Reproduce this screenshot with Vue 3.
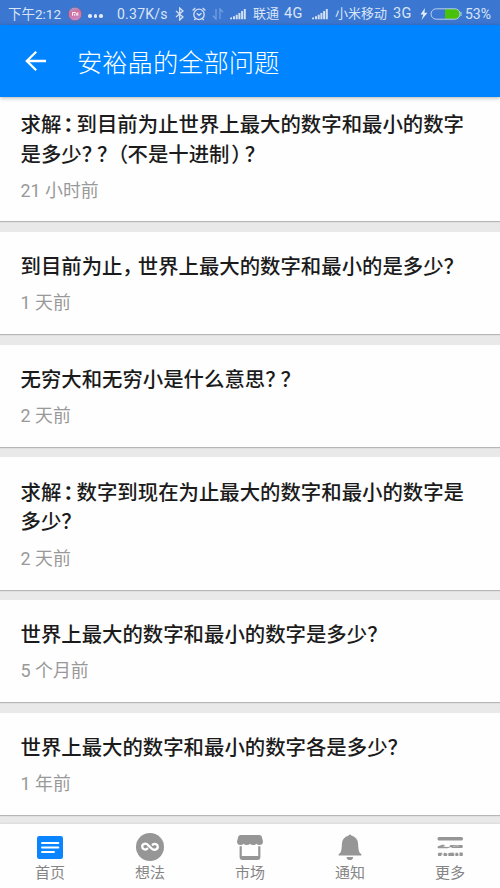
<script setup>
const questions = [
  { lines: ['求解：到目前为止世界上最大的数字和最小的数字', '是多少？？（不是十进制）？'], time: '21 小时前' },
  { lines: ['到目前为止，世界上最大的数字和最小的是多少？'], time: '1 天前' },
  { lines: ['无穷大和无穷小是什么意思？？'], time: '2 天前' },
  { lines: ['求解：数字到现在为止最大的数字和最小的数字是', '多少？'], time: '2 天前' },
  { lines: ['世界上最大的数字和最小的数字是多少？'], time: '5 个月前' },
  { lines: ['世界上最大的数字和最小的数字各是多少？'], time: '1 年前' },
]
const kinds = { '：': 'colon', '？': 'ask', '，': 'comma', '（': 'open', '）': 'close' }
const parts = (line) => line.split(/([：？，（）])/).filter(Boolean).map((t) => ({ t, kind: kinds[t] }))
</script>

<template>
  <div class="screen">
    <header class="status">
      <span class="clock">下午2:12</span>
      <svg class="mi" viewBox="0 0 16 16">
        <defs>
          <linearGradient id="ball" x1="0" y1="0" x2="0.3" y2="1">
            <stop offset="0" stop-color="#8fb6ef" /><stop offset="0.45" stop-color="#d56c9b" /><stop offset="1" stop-color="#c787c8" />
          </linearGradient>
        </defs>
        <circle cx="8" cy="8" r="6.9" fill="url(#ball)" stroke="#56699f" stroke-width="0.9" />
        <path d="M5.5 9.6V6.5h2.8q1 0 1 1v2.1M7.4 8v1.6M10.8 6.4v3.2" fill="none" stroke="#fff" stroke-width="1" />
      </svg>
      <span class="dots"><i></i><i></i><i></i></span>
      <span class="speed">0.37K/s</span>
      <svg class="bt" viewBox="0 0 10 14"><path d="M1 4l7 6-3.3 3V1L8 4l-7 6" fill="none" stroke="#d3e0f4" stroke-width="1.3" /></svg>
      <svg class="alarm" viewBox="0 0 14 14"><g fill="none" stroke="#d3e0f4" stroke-width="1.3"><circle cx="7" cy="7.4" r="5.2" /><path d="M4.7 6.3L7 8.3l2.500-2M.6 3.400L3.300 1M13.400 3.400L10.700 1M3.500 11.600l-1.200 1.500M10.500 11.600l1.200 1.500" /></g></svg>
      <svg class="arrows" viewBox="0 0 12 12"><path d="M4 1v10L1 7.700M8 11V1l3 3.300" fill="none" stroke="#759fdf" stroke-width="1.300" /></svg>
      <svg class="signal s1" viewBox="0 0 16 12"><path d="M0 11.300V10l2-1v2.300zM3 8.300h2v3H3zM5.700 6.800h2v4.500h-2zM8.400 5h2v6.300h-2zM11.100 3h2v8.300h-2zM13.800 1h2v10.300h-2z" fill="#d3e0f4" /></svg>
      <span class="unicom">联通</span>
      <span class="g4">4G</span>
      <svg class="signal s2" viewBox="0 0 16 12"><path d="M0 11.300V10l2-1v2.300zM3 8.300h2v3H3zM5.700 6.800h2v4.500h-2zM8.400 5h2v6.300h-2zM11.100 3h2v8.300h-2zM13.800 1h2v10.300h-2z" fill="#d3e0f4" /></svg>
      <span class="mobile">小米移动</span>
      <span class="g3">3G</span>
      <svg class="bolt" viewBox="0 0 8 12"><path d="M5 0L.5 6.600h2.800L1.500 12 7.500 4.800H4.400z" fill="#e3ecf9" /></svg>
      <svg class="battery" viewBox="0 0 32 12"><path d="M15 1h10.500a5 5 0 0 1 0 10H15z" fill="#48c10a" /><rect x="1" y=".8" width="29" height="10.400" rx="5.200" fill="none" stroke="#b9cfee" stroke-width="1" /><path d="M31 4v4" stroke="#b9cfee" /></svg>
      <span class="percent">53%</span>
    </header>

    <div class="appbar">
      <svg class="back" viewBox="0 0 22 22"><path d="M21 11H2M11.200 1.700L1.800 11l9.400 9.300" fill="none" stroke="#fff" stroke-width="2.300" /></svg>
      <h1>安裕晶的全部问题</h1>
    </div>

    <main>
      <article v-for="(q, i) in questions" :key="i" :class="{ first: i === 0 }">
        <h2>
          <span v-for="line in q.lines" :key="line" class="line"><span v-for="(p, j) in parts(line)" :key="j" :class="p.kind && ['punct', p.kind]">{{ p.t }}</span></span>
        </h2>
        <p>{{ q.time }}</p>
      </article>
    </main>

    <nav>
      <div class="tab">
        <svg viewBox="0 0 28 28"><rect x="1" y="3" width="26" height="23" rx="2.300" fill="#0a84ff" /><path d="M6 10h16.300M6 14.500h16.300M6 19h12" stroke="#fff" stroke-width="2" stroke-linecap="round" /></svg>
        <span>首页</span>
      </div>
      <div class="tab">
        <svg viewBox="0 0 28 28"><circle cx="14" cy="14" r="14" fill="#969696" /><path d="M11.300 15.600C9.300 17.300 6.200 16.400 6.200 13.600C6.200 10.600 10 9.700 12 12.100L15.600 15.500C17.600 17.700 21.800 16.900 21.800 13.800C21.800 11 18.700 10 16.700 11.700" fill="none" stroke="#fff" stroke-width="2.300" stroke-linecap="round" /></svg>
        <span>想法</span>
      </div>
      <div class="tab">
        <svg viewBox="0 0 28 28"><g fill="#969696"><path d="M4.500 2h19q1.600 0 2.200 1.600L27 8.500q0 3.200-3.300 3.500-2.400 0-3.300-1.300-.9 1.300-3.200 1.300t-3.200-1.300q-.9 1.300-3.200 1.300t-3.200-1.300q-.9 1.300-3.300 1.300Q1 11.700 1 8.500l1.300-4.900Q2.900 2 4.500 2z" /><path d="M3.600 13.200h2.200V23h16.400v-9.800h2.200V24q0 3-2.700 3h-15.200q-2.900 0-2.900-3z" /></g></svg>
        <span>市场</span>
      </div>
      <div class="tab">
        <svg viewBox="0 0 28 28"><path d="M12.600 2.600q1.400-2.300 2.800 0 6.300 1.700 6.700 8.300.2 7.200 1.800 9l1.500 1.400v1.200H2.600v-1.200L4.100 20q1.600-1.900 1.800-9.100.4-6.600 6.700-8.300zM10.500 23.900h6.700q-.5 3.200-3.300 3.200t-3.400-3.200z" fill="#969696" /></svg>
        <span>通知</span>
      </div>
      <div class="tab">
        <svg viewBox="0 0 28 28"><g fill="#969696"><rect x="1.500" y="4" width="25.500" height="3.600" rx="1.600" /><path d="M2 13.200l5-1.700 2.500 1.500-3.500.8 7 .2 1.500-2h11.800q1 1.500 0 3H16l-1-1-3.500 1.300H2.300Q.8 14.600 2 13.200z" /><path d="M2.500 19.700h3.700l-1 3.300H2.300q-1.300-1.500.2-3.300zM8 19.700l2.500.4.700 2.900H7.500zM12.500 20l5-.6.800 3.600h-6zM19.500 19.700h2.300l.6 3.300h-3zM23.500 19.500h3q1 1.800 0 3.500h-3z" /><path d="M6 20.700h17v1H6z" opacity=".55" /></g><path d="M17 13.600l3-.8 3 .5" fill="none" stroke="#d2d2d2" stroke-width=".8" /></svg>
        <span>更多</span>
      </div>
    </nav>
  </div>
</template>

<style>
body { margin: 0; }
</style>

<style scoped>
.screen {
  width: 500px;
  height: 888px;
  display: flex;
  flex-direction: column;
  overflow: hidden;
  background: #e9e9e9;
  font-family: Roboto, "Noto Sans CJK SC", sans-serif;
}
.status {
  flex: none;
  height: 25px;
  display: flex;
  align-items: center;
  box-sizing: border-box;
  padding: 2px 0 0 8px;
  background: #3b76d1;
  color: #d9e5f6;
  font-size: 13px;
  line-height: 22px;
  white-space: nowrap;
}
.status > * { flex: none; }
.clock { width: 59px; font-size: 13.500px; }
.mi { width: 16px; height: 16px; margin-right: 5px; }
.dots { width: 29px; display: flex; gap: 2px; padding-top: 5px; }
.dots i { width: 3.500px; height: 3.500px; border-radius: 50%; background: #e0eaf8; }
.speed { width: 58px; font-size: 14px; letter-spacing: .25px; }
.bt { width: 10px; height: 14px; margin-right: 7px; }
.alarm { width: 14px; height: 14px; margin-right: 6px; }
.arrows { width: 12px; height: 12px; margin-right: 6px; }
.signal { width: 16px; height: 12px; margin-right: 7px; }
.unicom { width: 31px; }
.g4 { width: 28px; font-size: 14.500px; letter-spacing: .3px; }
.mobile { width: 58px; }
.g3 { width: 27px; font-size: 14.500px; letter-spacing: .3px; }
.bolt { width: 8px; height: 12px; margin-right: 2px; }
.battery { width: 32px; height: 12px; margin-right: 3px; }
.percent { font-size: 14px; }
.appbar {
  flex: none;
  position: relative;
  z-index: 1;
  height: 72px;
  display: flex;
  align-items: center;
  box-sizing: border-box;
  padding-left: 25px;
  background: #0084ff;
  box-shadow: 0 1px 4px rgba(0, 0, 0, .3);
}
.back { width: 22px; height: 22px; margin-right: 30px; }
h1 {
  margin: 0;
  color: #fff;
  font-family: "Noto Sans CJK SC", sans-serif;
  font-size: 25.300px;
  font-weight: 300;
  line-height: 36px;
  padding-bottom: 1px;
}
main { flex: 1; min-height: 0; overflow: hidden; }
article {
  box-sizing: border-box;
  padding: 19.400px 20.500px 18.300px;
  margin-bottom: 10.300px;
  background: #fefefe;
  box-shadow: 0 1px 1px rgba(0, 0, 0, .22);
}
article.first { padding-top: 12px; padding-bottom: 18.100px; }
h2 {
  margin: 0 0 10.700px;
  color: #1b1b1b;
  font-family: "Noto Sans CJK SC", sans-serif;
  font-size: 20.400px;
  font-weight: 500;
  line-height: 29.500px;
}
.line { display: block; white-space: nowrap; }
.punct {
  display: inline-block;
  box-sizing: border-box;
  width: 15.300px;
  height: 29.500px;
  vertical-align: top;
  font-feature-settings: "palt";
}
.open { padding-left: 5px; }
.close { padding-left: 2.500px; }
.colon { padding-left: 2px; font-weight: 700; }
.comma { padding-left: 1px; }
p {
  margin: 0 0 .2px;
  color: #999;
  font-size: 17.900px;
  line-height: 24.500px;
}
nav {
  flex: none;
  position: relative;
  height: 64px;
  display: grid;
  grid-template-columns: repeat(5, 1fr);
  background: #fefefe;
  box-shadow: 0 -1px 2px rgba(0, 0, 0, .06);
}
.tab {
  display: flex;
  flex-direction: column;
  align-items: center;
  padding-top: 9px;
  color: #858585;
  font-size: 15px;
  line-height: 22px;
}
.tab svg { width: 28px; height: 28px; margin-bottom: 1px; }
</style>
